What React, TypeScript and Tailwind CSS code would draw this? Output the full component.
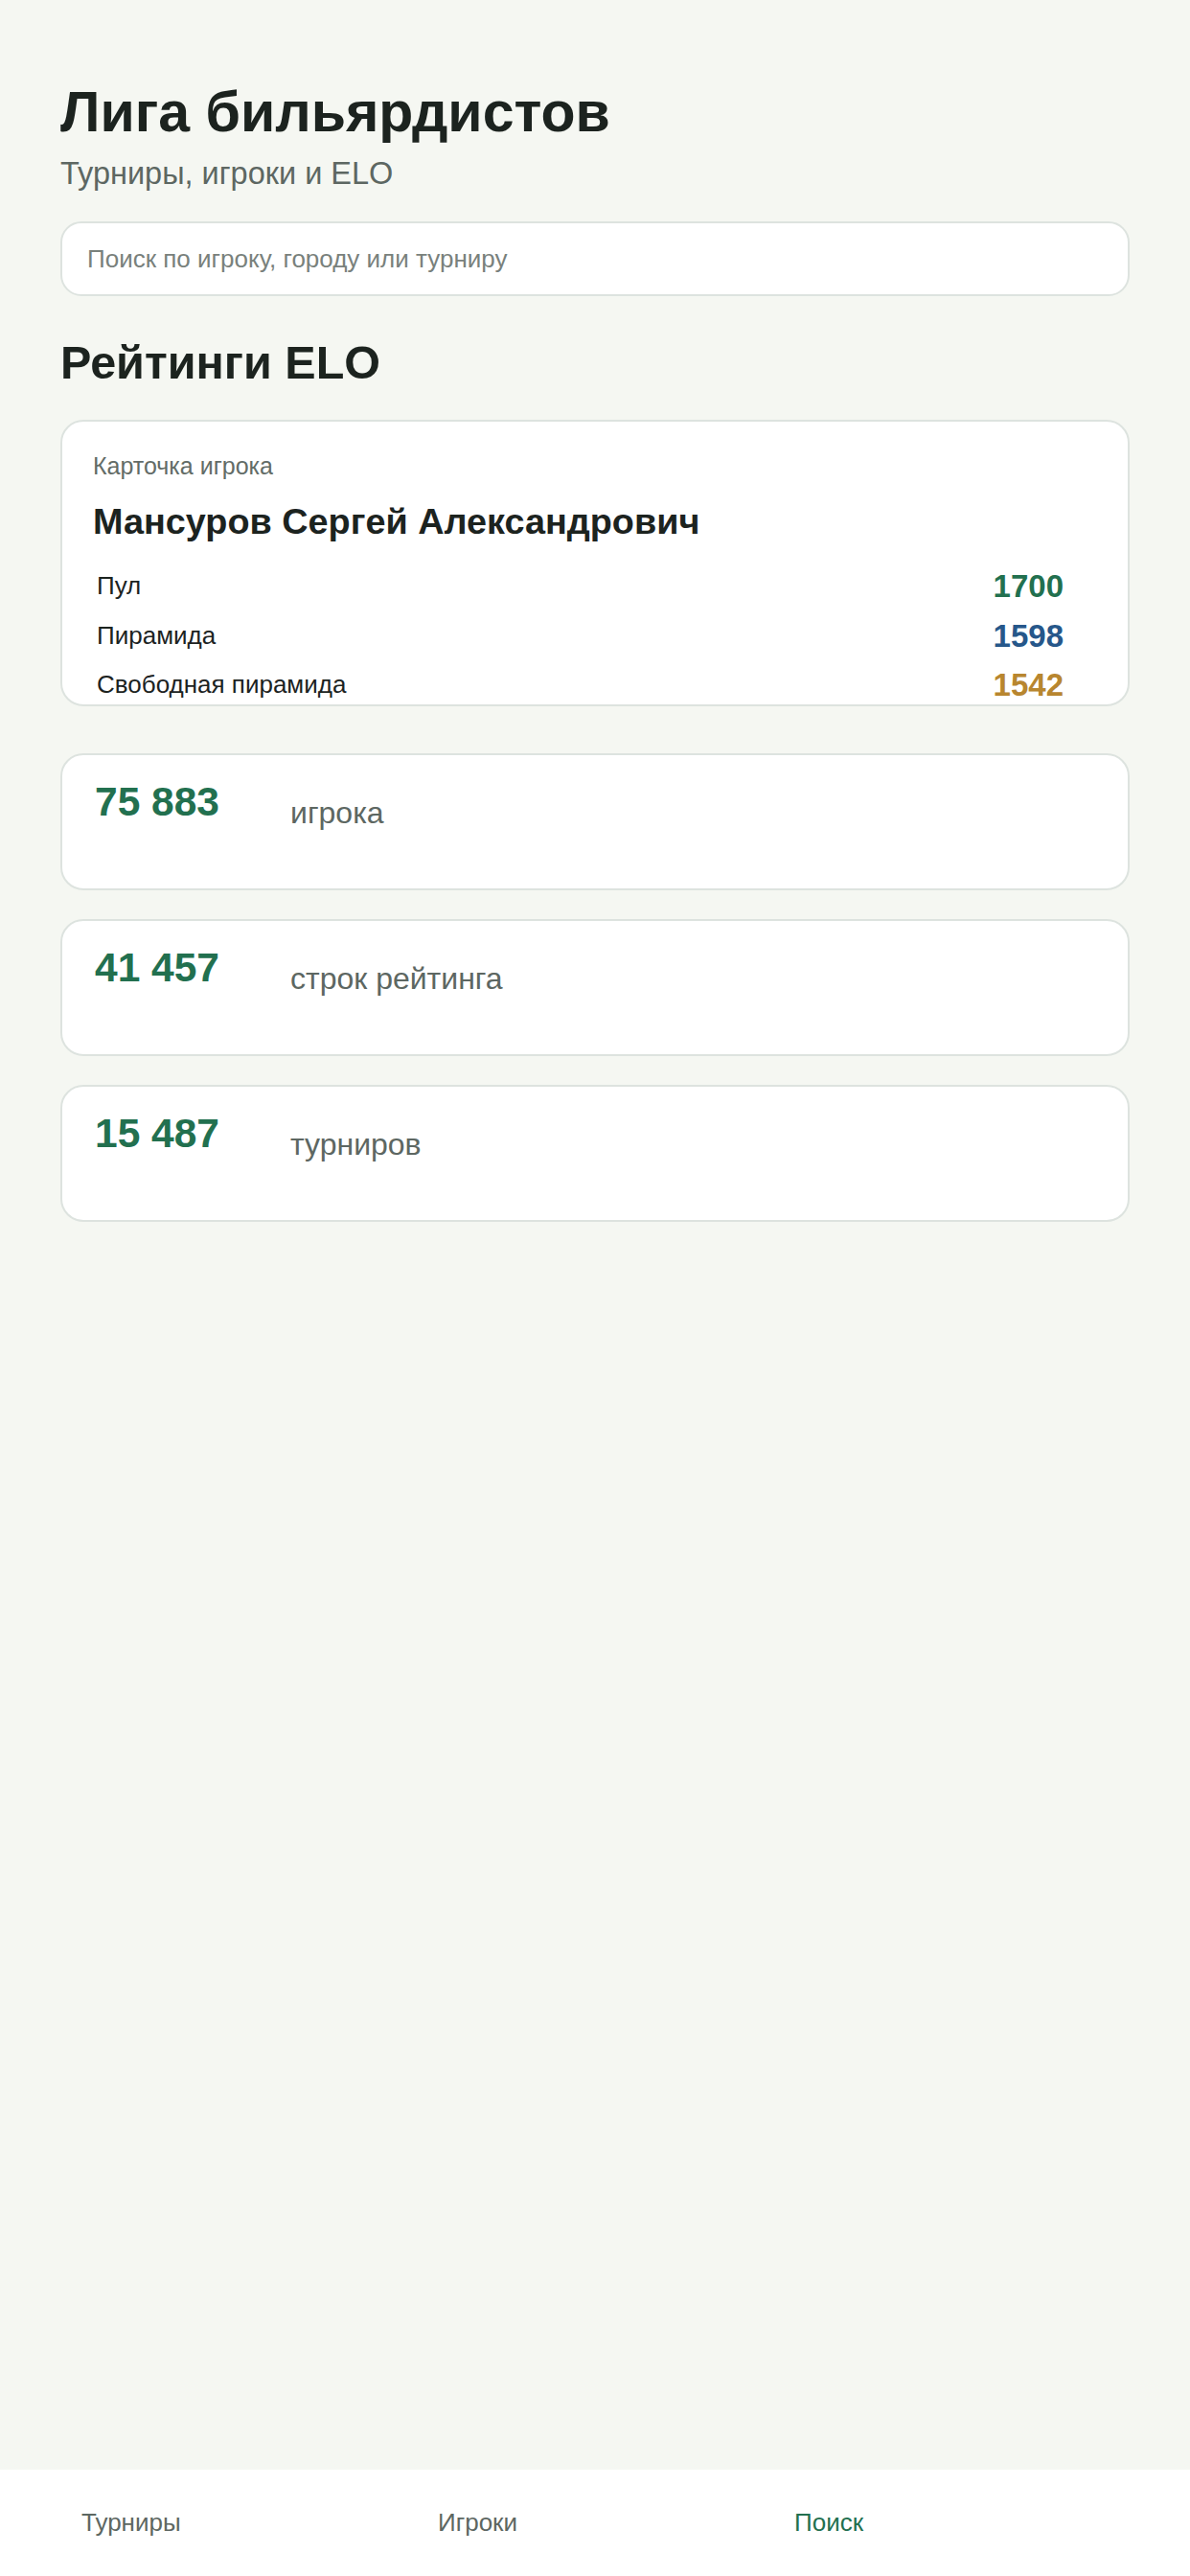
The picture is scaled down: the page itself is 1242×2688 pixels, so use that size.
import React from 'react';

const ratings = [
    { label: 'Пул', value: 1700, color: 'text-[#22704f]' },
    { label: 'Пирамида', value: 1598, color: 'text-[#26578a]' },
    { label: 'Свободная пирамида', value: 1542, color: 'text-[#b8862f]' },
];

const stats = [
    { value: '75 883', label: 'игрока' },
    { value: '41 457', label: 'строк рейтинга' },
    { value: '15 487', label: 'турниров' },
];

const tabs = [
    { label: 'Турниры', active: false },
    { label: 'Игроки', active: false },
    { label: 'Поиск', active: true },
];

const PlayerCard: React.FC = () => (
    <div className="h-[299px] overflow-hidden rounded-[24px] border-2 border-[#dde3df] bg-white px-[32px] pt-[32px]">
        <div className="text-[25px] leading-[29px] text-[#636c67]">Карточка игрока</div>
        <div className="mt-[22px] text-[37.8px] font-bold leading-[43px] text-[#1c231f]">Мансуров Сергей Александрович</div>
        <div className="mt-[20px] pl-[4px] pr-[35px]">
            {ratings.map(r => (
                <div key={r.label} className="flex h-[51.5px] items-center justify-between">
                    <span className="text-[26px] text-[#1c231f]">{r.label}</span>
                    <span className={`text-[33px] font-bold ${r.color}`}>{r.value}</span>
                </div>
            ))}
        </div>
    </div>
);

const StatCard: React.FC<{ value: string; label: string }> = ({ value, label }) => (
    <div className="flex h-[143px] items-start rounded-[24px] border-2 border-[#dde3df] bg-white pl-[34px] pt-[24px]">
        <div className="w-[204px] text-[42.5px] font-bold leading-[49px] text-[#22704f]">{value}</div>
        <div className="mt-[18px] text-[32px] leading-[37px] text-[#5d6762]">{label}</div>
    </div>
);

export default function App() {
    return (
        <div className="flex min-h-screen flex-col bg-[#f5f7f2] font-['Liberation_Sans',Arial,sans-serif]">
            <main className="flex-1 px-[63px] pt-[83px]">
                <h1 className="text-[59px] font-bold leading-[68px] text-[#1c231f]">Лига бильярдистов</h1>
                <p className="mt-[11px] text-[32.5px] leading-[38px] text-[#5d6762]">Турниры, игроки и ELO</p>

                <input
                    type="text"
                    placeholder="Поиск по игроку, городу или турниру"
                    className="mt-[31px] h-[78px] w-full rounded-[22px] border-2 border-[#dde3df] bg-white px-[26px] text-[26px] text-[#1c231f] outline-none placeholder:text-[#79817c]"
                />

                <h2 className="mt-[42px] text-[48.5px] font-bold leading-[55px] text-[#1c231f]">Рейтинги ELO</h2>

                <div className="mt-[32px]">
                    <PlayerCard />
                </div>

                <div className="mt-[49px] flex flex-col gap-[30px]">
                    {stats.map(s => <StatCard key={s.label} value={s.value} label={s.label} />)}
                </div>
            </main>

            <nav className="grid h-[111px] grid-cols-3 bg-white px-[63px] pt-[40px]">
                {tabs.map(t => (
                    <button
                        key={t.label}
                        className={`self-start pl-[22px] text-left text-[26px] leading-[30px] ${t.active ? 'text-[#22704f]' : 'text-[#5d6762]'}`}
                    >
                        {t.label}
                    </button>
                ))}
            </nav>
        </div>
    );
}
